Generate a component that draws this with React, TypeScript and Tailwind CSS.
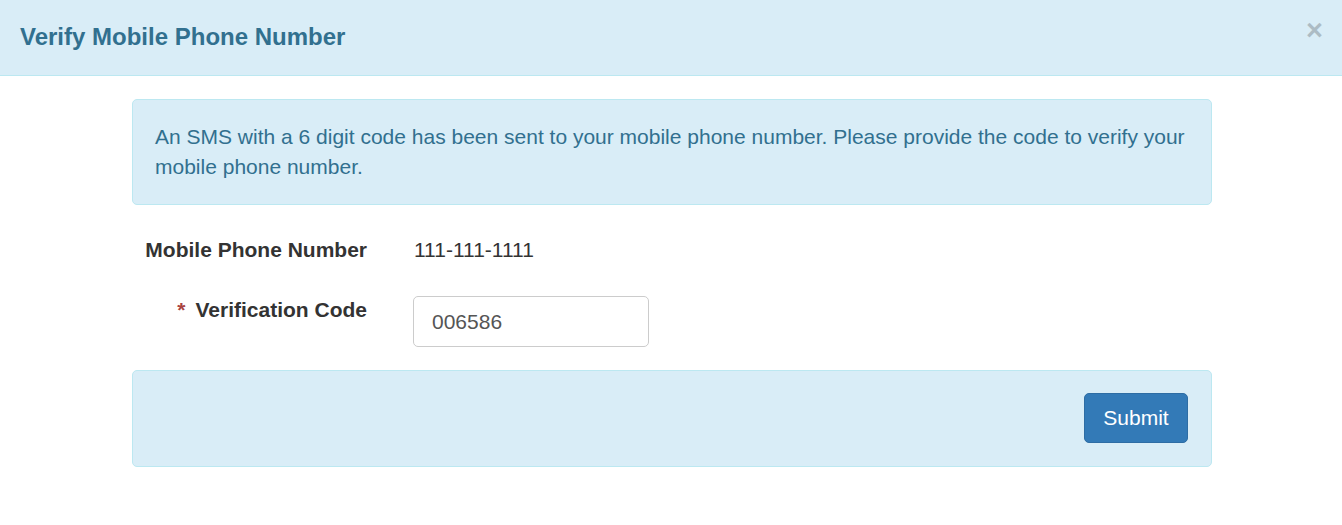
import React, { useState } from 'react';

export default function App() {
  const [code, setCode] = useState('006586');

  return (
    <div className="w-[1342px] h-[525px] bg-white font-['Liberation_Sans',Arial,sans-serif]">
      {/* Header */}
      <div className="h-[76px] bg-[#d9edf7] border-b border-[#bce8f1] flex items-center justify-between pl-5 pr-[19px]">
        <h4 className="text-[24px] font-bold text-[#31708f] leading-none -mt-[2px]">Verify Mobile Phone Number</h4>
        <button className="text-[29px] font-bold leading-none text-[#000] opacity-20 -mt-[14px]">×</button>
      </div>

      {/* Body */}
      <div className="w-[1080px] ml-[132px] pt-[23px] text-[21px] leading-[30px]">
        <div className="bg-[#d9edf7] border border-[#bce8f1] rounded-[5px] px-[22px] py-[22px] text-[#31708f]">
          An SMS with a 6 digit code has been sent to your mobile phone number. Please provide the code to verify your mobile phone number.
        </div>

        <div className="flex items-start mt-[30px] text-[#333]">
          <label className="w-[235px] text-right font-bold">Mobile Phone Number</label>
          <span className="ml-[47px]">111-111-1111</span>
        </div>

        <div className="flex items-start mt-[30px] text-[#333]">
          <label className="w-[235px] text-right font-bold">
            <span className="text-[#a94442] mr-[10px]">*</span>Verification Code
          </label>
          <input
            value={code}
            onChange={(e) => setCode(e.target.value)}
            className="ml-[46px] mt-[1px] w-[236px] h-[51px] border border-[#ccc] rounded-[5px] px-[18px] text-[21px] text-[#555] outline-none"
          />
        </div>

        <div className="mt-[23px] h-[97px] bg-[#d9edf7] border border-[#bce8f1] rounded-[5px] flex items-start justify-end pr-[23px] pt-[22px]">
          <button className="w-[104px] h-[50px] bg-[#337ab7] border border-[#2e6da4] rounded-[5px] text-white text-[21px]">
            Submit
          </button>
        </div>
      </div>
    </div>
  );
}
